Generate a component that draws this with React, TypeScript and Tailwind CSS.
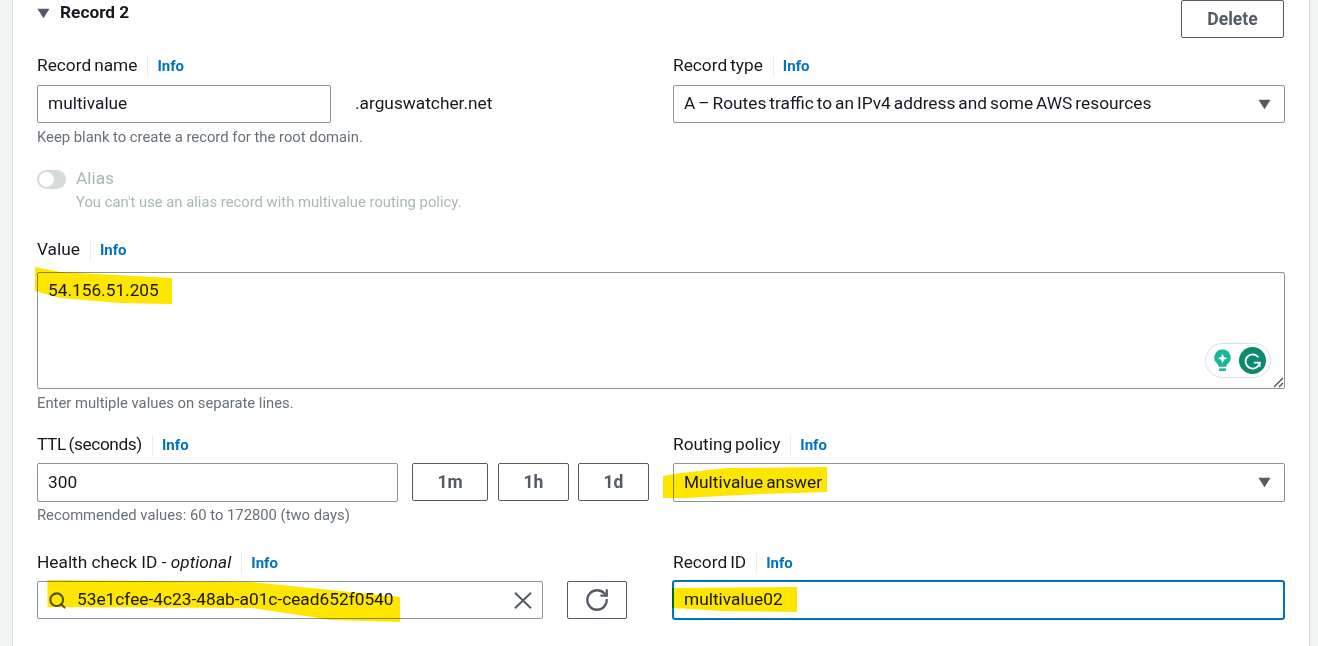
import { RotateCw, Search } from "lucide-react"
import type { ReactNode } from "react"

const bodyText = "text-[17.3px] [word-spacing:-1.3px] text-[#16191f]"

function Caret() {
  return (
    <svg viewBox="0 0 14 11" className="h-[11px] w-[13px] fill-[#545b64]">
      <path d="M0.5 0.5h13L7 10.5z" />
    </svg>
  )
}

function FieldLabel({ children }: { children: ReactNode }) {
  return (
    <div className="flex h-[26px] items-center">
      <span className={`leading-[22px] ${bodyText}`}>{children}</span>
      <span className="ml-[10px] mt-[2px] h-[21px] border-l border-[#eaeded]" />
      <span className="ml-[9px] mt-[2px] text-[15px] font-bold text-[#0073bb]">Info</span>
    </div>
  )
}

function Hint({ children }: { children: ReactNode }) {
  return <p className="text-[14.8px] leading-[18px] text-[#687078]">{children}</p>
}

function SmallButton({ label, className }: { label: string; className: string }) {
  return (
    <button
      type="button"
      className={`flex h-[38px] items-center justify-center rounded-[2px] border border-[#545b64] bg-white text-[17.5px] font-bold text-[#545b64] ${className}`}
    >
      {label}
    </button>
  )
}

// marker strokes, coordinates are page pixels (panel starts at x=13)
function Highlight({ className, box, d }: { className: string; box: string; d: string }) {
  return (
    <svg viewBox={box} className={`pointer-events-none absolute mix-blend-multiply ${className}`}>
      <path d={d} fill="#ffe600" />
    </svg>
  )
}

export default function App() {
  return (
    <div className="h-[646px] overflow-hidden bg-[#f2f3f3] pl-[12px] pr-[8px] font-['Roboto',sans-serif]">
      <div className="relative h-full border-x border-[#d5dbdb] bg-white px-[24px]">
        <div className="flex h-[38px] items-start justify-between">
          <div className="flex h-[26px] items-center">
            <Caret />
            <span className="ml-[10px] text-[17.3px] font-bold text-[#16191f]">Record 2</span>
          </div>
          <SmallButton label="Delete" className="mr-[1px] w-[103px]" />
        </div>

        <div className="mt-[14px] grid grid-cols-[612px_612px] gap-x-[24px]">
          <div>
            <FieldLabel>Record name</FieldLabel>
            <div className="mt-[7px] flex items-center">
              <div className={`flex h-[38px] w-[294px] items-center rounded-[2px] border border-[#879596] pl-[10px] ${bodyText}`}>
                multivalue
              </div>
              <span className={`ml-[24px] ${bodyText}`}>.arguswatcher.net</span>
            </div>
            <div className="mt-[5px]">
              <Hint>Keep blank to create a record for the root domain.</Hint>
            </div>
          </div>
          <div>
            <FieldLabel>Record type</FieldLabel>
            <div className={`mt-[7px] flex h-[38px] items-center justify-between rounded-[2px] border border-[#879596] pl-[10px] pr-[13px] ${bodyText}`}>
              A – Routes traffic to an IPv4 address and some AWS resources
              <Caret />
            </div>
          </div>
        </div>

        <div className="mt-[22px] flex">
          <div className="mt-[2px] flex h-[19px] w-[29px] items-center rounded-full bg-[#d5dbdb] px-[2px]">
            <div className="h-[15px] w-[15px] rounded-full bg-white" />
          </div>
          <div className="-mt-[1px] ml-[10px]">
            <div className="text-[17.3px] leading-[22px] text-[#aab7b8]">Alias</div>
            <p className="mt-[4px] text-[14.8px] leading-[18px] text-[#aab7b8]">
              You can't use an alias record with multivalue routing policy.
            </p>
          </div>
        </div>

        <div className="mt-[25px]">
          <FieldLabel>Value</FieldLabel>
          <div className={`relative mt-[10px] h-[117px] rounded-[2px] border border-[#879596] pl-[10px] pt-[6px] leading-[22px] ${bodyText}`}>
            54.156.51.205
            <div className="absolute bottom-[10px] right-[13px] flex h-[35px] w-[66px] items-center justify-between rounded-full border border-[#d9dcec] bg-white pl-[7px] pr-[4px]">
              <svg viewBox="0 0 20 24" className="h-[23px] w-[19px]">
                <path
                  d="M10 0.5a8.6 8.6 0 0 0-5.4 15.3c.9.8 1.2 1.5 1.3 2.7h8.2c.1-1.2.4-1.9 1.3-2.7A8.6 8.6 0 0 0 10 0.5z"
                  fill="#15b79e"
                />
                <path d="M6.4 20.3h7.2v2.7H6.4z" fill="#15b79e" />
                <path d="M10 4.6l1.5 3.6 3.6 1.5-3.6 1.5L10 14.8l-1.5-3.6-3.6-1.5 3.6-1.5z" fill="#fff" />
              </svg>
              <div className="flex h-[27px] w-[27px] items-center justify-center rounded-full bg-[#0b8a6f]">
                <svg viewBox="0 0 24 24" className="h-[20px] w-[20px] fill-none stroke-white stroke-[2.2]">
                  <path d="M18.5 7.5A8.5 8.5 0 1 0 20 14h-7" />
                  <path d="M20 14v5" />
                </svg>
              </div>
            </div>
            <svg viewBox="0 0 12 12" className="absolute bottom-0 right-0 h-[12px] w-[12px] stroke-[#444]">
              <path d="M2 11L11 2M7 11l4-4" fill="none" strokeWidth="1.2" />
            </svg>
          </div>
          <div className="mt-[5px]">
            <Hint>Enter multiple values on separate lines.</Hint>
          </div>
        </div>

        <div className="mt-[19px] grid grid-cols-[612px_612px] gap-x-[24px]">
          <div>
            <FieldLabel>
              <span className="tracking-[-0.4px]">TTL (seconds)</span>
            </FieldLabel>
            <div className="mt-[6px] flex">
              <div className={`flex h-[39px] w-[361px] items-center rounded-[2px] border border-[#879596] pl-[10px] ${bodyText}`}>
                300
              </div>
              <SmallButton label="1m" className="ml-[14px] w-[76px]" />
              <SmallButton label="1h" className="ml-[10px] w-[71px]" />
              <SmallButton label="1d" className="ml-[9px] w-[71px]" />
            </div>
            <div className="mt-[4px]">
              <Hint>Recommended values: 60 to 172800 (two days)</Hint>
            </div>
          </div>
          <div>
            <FieldLabel>Routing policy</FieldLabel>
            <div className={`mt-[6px] flex h-[39px] items-center justify-between rounded-[2px] border border-[#879596] pl-[10px] pr-[13px] ${bodyText}`}>
              Multivalue answer
              <Caret />
            </div>
          </div>
        </div>

        <div className="mt-[25px] grid grid-cols-[612px_612px] gap-x-[24px]">
          <div>
            <FieldLabel>
              <span className="[word-spacing:0px]">
                Health check ID - <em>optional</em>
              </span>
            </FieldLabel>
            <div className="mt-[6px] flex">
              <div className={`flex h-[38px] w-[506px] items-center rounded-[2px] border border-[#879596] pl-[10px] pr-[10px] ${bodyText}`}>
                <Search size={19} strokeWidth={2.6} className="text-[#545b64]" />
                <span className="ml-[10px] flex-1">53e1cfee-4c23-48ab-a01c-cead652f0540</span>
                <svg viewBox="0 0 18 17" className="h-[17px] w-[18px] fill-none stroke-[#545b64] stroke-[2]">
                  <path d="M1 0.8L17 16.2M17 0.8L1 16.2" />
                </svg>
              </div>
              <button
                type="button"
                className="ml-[24px] flex h-[38px] w-[60px] items-center justify-center rounded-[2px] border border-[#545b64] bg-white text-[#545b64]"
              >
                <RotateCw size={26} strokeWidth={2.1} />
              </button>
            </div>
          </div>
          <div>
            <FieldLabel>Record ID</FieldLabel>
            <div className={`-ml-[1px] mt-[5px] flex h-[40px] items-center rounded-[3px] border-2 border-[#0073bb] pl-[10px] ${bodyText}`}>
              multivalue02
            </div>
          </div>
        </div>

        <Highlight
          className="left-[22px] top-[266px] h-[40px] w-[138px]"
          box="35 266 138 40"
          d="M35 267L60 272L172 278V304L120 303L60 298L35 291Z"
        />
        <Highlight
          className="left-[650px] top-[466px] h-[32px] w-[165px]"
          box="663 466 165 32"
          d="M663 476L681 473L727 468L827 467V492L761 494L702 497L663 500Z"
        />
        <Highlight
          className="left-[34px] top-[580px] h-[43px] w-[353px]"
          box="47 580 353 43"
          d="M47.5 580L252 582L400 597V622L332 620L252 608L47.5 607Z"
        />
        <Highlight
          className="left-[659px] top-[587px] h-[26px] w-[125px]"
          box="672 587 125 26"
          d="M672 588L797 587V612L723 611L672 608Z"
        />
      </div>
    </div>
  )
}
